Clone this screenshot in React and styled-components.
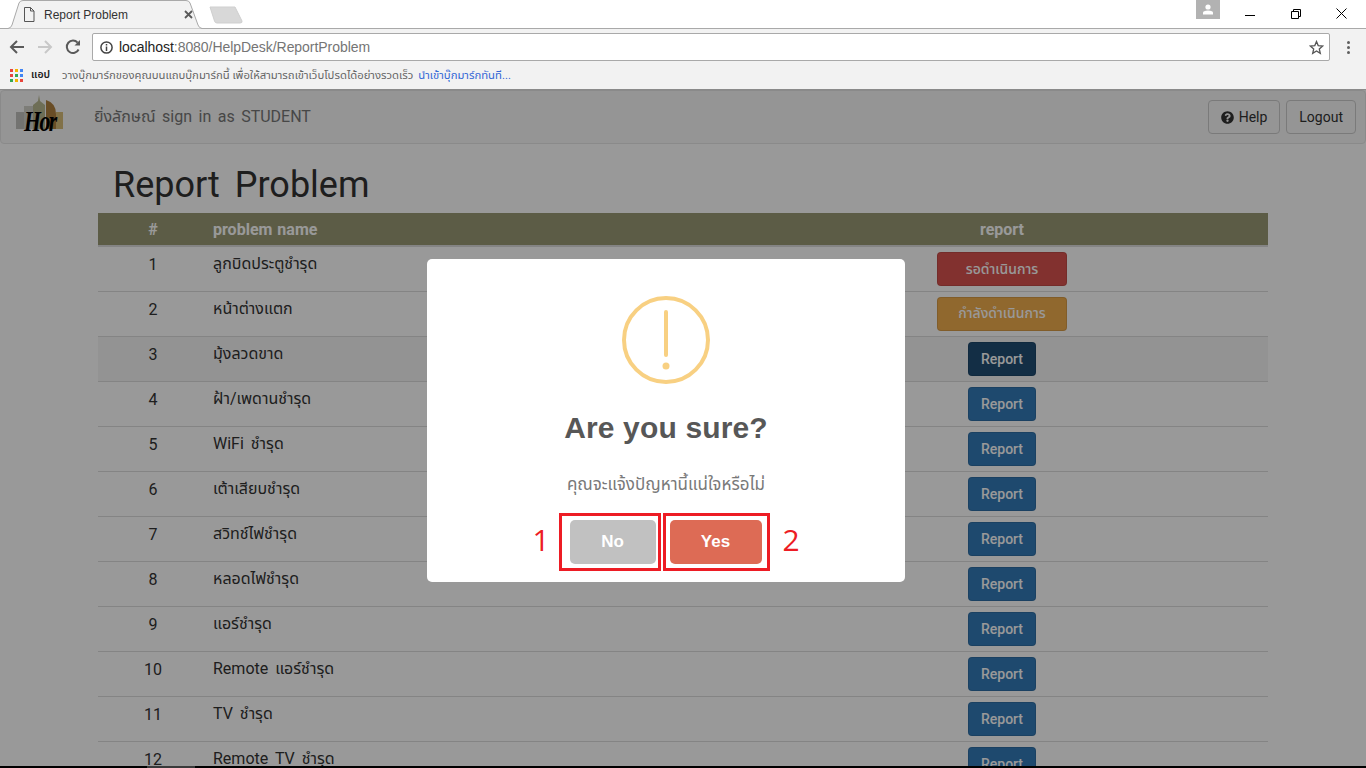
import React from 'react'
import styled, { createGlobalStyle } from 'styled-components'
import { FaQuestionCircle } from 'react-icons/fa'

const THAI = `Roboto, "Noto Sans", "Noto Sans Thai", "DejaVu Sans", sans-serif`
const ARIAL = `"Liberation Sans", Arial, sans-serif`

const problems = [
  { id: 1, name: 'ลูกบิดประตูชำรุด', status: 'waiting' },
  { id: 2, name: 'หน้าต่างแตก', status: 'working' },
  { id: 3, name: 'มุ้งลวดขาด', hover: true },
  { id: 4, name: 'ฝ้า/เพดานชำรุด' },
  { id: 5, name: 'WiFi ชำรุด' },
  { id: 6, name: 'เต้าเสียบชำรุด' },
  { id: 7, name: 'สวิทช์ไฟชำรุด' },
  { id: 8, name: 'หลอดไฟชำรุด' },
  { id: 9, name: 'แอร์ชำรุด' },
  { id: 10, name: 'Remote แอร์ชำรุด' },
  { id: 11, name: 'TV ชำรุด' },
  { id: 12, name: 'Remote TV ชำรุด' },
]

const appColors = ['#e8453c', '#f4b400', '#4285f4', '#e8453c', '#34a853', '#4285f4', '#34a853', '#f4b400', '#e8453c']

const GlobalStyle = createGlobalStyle`
  html, body { margin: 0; padding: 0; height: 100%; overflow: hidden; }
  body { font-family: ${THAI}; background: #fff; }
  * { box-sizing: border-box; }
`

const Screen = styled.div`
  height: 768px;
  display: flex;
  flex-direction: column;
  overflow: hidden;
`

const TabStrip = styled.div`
  height: 29px;
  flex: none;
  display: flex;
  align-items: flex-start;
  background: #fff;
  border-bottom: 1px solid #a9a9a9;
`

const Tab = styled.div`
  position: relative;
  width: 203px;
  height: 29px;
  margin-left: 5px;
  padding-left: 18px;
  display: flex;
  align-items: center;
  gap: 9px;
  font-family: ${ARIAL};
  font-size: 12px;
  color: #333;
  svg.shape { position: absolute; left: 0; top: 0; }
  > span, > svg:not(.shape) { position: relative; }
`

const TabTitle = styled.span`
  width: 131px;
  padding-top: 1px;
`

const NewTab = styled.svg`
  margin: 6px 0 0 1px;
  flex: none;
`

const WindowControls = styled.div`
  margin-left: auto;
  padding-right: 2px;
  display: flex;
  align-items: flex-start;
`

const Avatar = styled.div`
  width: 24px;
  height: 19px;
  margin-right: 7.5px;
  background: #b2b2b2;
  display: flex;
  align-items: center;
  justify-content: center;
`

const WinButton = styled.div`
  width: 45.5px;
  height: 27px;
  display: flex;
  align-items: center;
  justify-content: center;
`

const Toolbar = styled.div`
  height: 33px;
  flex: none;
  display: flex;
  align-items: center;
  background: #f2f2f2;
  padding: 4px 0 1px 9px;
`

const NavIcon = styled.div`
  width: 28px;
  display: flex;
  justify-content: flex-start;
`

const Omnibox = styled.div`
  width: 1238px;
  height: 28px;
  margin-left: -1px;
  background: #fff;
  border: 1px solid #a9a9a9;
  border-radius: 2px;
  display: flex;
  align-items: center;
  padding: 0 5px 0 7px;
  font-family: ${ARIAL};
  font-size: 14px;
  letter-spacing: -0.05px;
  color: #757575;
`

const Host = styled.span`
  color: #222;
  margin-left: 6px;
`

const Star = styled.svg`
  margin-left: auto;
`

const Kebab = styled.div`
  margin-left: 17px;
  display: flex;
  flex-direction: column;
  gap: 2px;
  i {
    width: 3px;
    height: 3px;
    background: #5f5f5f;
    border-radius: 50%;
  }
`

const BookmarkBar = styled.div`
  height: 28px;
  flex: none;
  background: #f2f2f2;
  display: flex;
  align-items: center;
  padding: 0 0 1px 10px;
  font-size: 11.3px;
  color: #666;
  border-bottom: 1px solid #8a8a8a;
`

const AppsGrid = styled.div`
  display: grid;
  grid-template-columns: repeat(3, 3px);
  grid-auto-rows: 3px;
  gap: 2px;
  margin-right: 8px;
`

const AppDot = styled.i`
  background: ${(p) => p.$color};
`

const AppsLabel = styled.span`
  color: #222;
  font-weight: 600;
  font-size: 10.5px;
  margin-right: 12px;
`

const BookmarkLink = styled.span`
  color: #3367d6;
  margin-left: 5px;
`

const Viewport = styled.main`
  position: relative;
  flex: 1;
  min-height: 0;
  overflow: hidden;
  background: #fff;
`

const Navbar = styled.header`
  height: 54px;
  background: #f8f8f8;
  border: 1px solid #e7e7e7;
  border-radius: 4px;
  display: flex;
  align-items: center;
  padding: 0 9px 0 14px;
`

const Logo = styled.div`
  position: relative;
  width: 50px;
  height: 50px;
  flex: none;
`

const LogoMark = styled.span`
  position: absolute;
  left: 9px;
  top: 13px;
  font-family: "Liberation Serif", serif;
  font-style: italic;
  font-weight: 700;
  font-size: 29px;
  line-height: 32px;
  letter-spacing: -2px;
  color: #000;
  transform: scaleX(0.75);
  transform-origin: left top;
`

const SignedIn = styled.div`
  margin-left: 29px;
  font-size: 16px;
  word-spacing: 2.5px;
  color: #777;
`

const NavActions = styled.div`
  margin-left: auto;
  display: flex;
  gap: 6px;
`

const NavButton = styled.button`
  height: 34px;
  padding: 0 12px;
  display: flex;
  align-items: center;
  gap: 5px;
  background: #fff0;
  border: 1px solid #ccc;
  border-radius: 4px;
  font-family: ${THAI};
  font-size: 14px;
  color: #333;
`

const Container = styled.div`
  width: 1170px;
  margin: 0 auto;
`

const PageTitle = styled.h1`
  margin: 21px 0 8px;
  padding-left: 15px;
  font-size: 36px;
  font-weight: 400;
  line-height: 40px;
  word-spacing: 6px;
  color: #333;
`

const Table = styled.table`
  width: 100%;
  border-collapse: collapse;
  table-layout: fixed;
  font-size: 16px;
  word-spacing: 3px;
  color: #333;
`

const HeadRow = styled.tr`
  background: #9a9a75;
  border-bottom: 2px solid #ddd;
`

const HeadCell = styled.th`
  height: 33px;
  padding: 1px 5px 0;
  color: #fff;
  font-size: 16px;
  font-weight: 700;
  word-spacing: 1px;
  text-align: ${(p) => p.$align || 'center'};
`

const Row = styled.tr`
  height: 45px;
  background: ${(p) => (p.$hover ? '#f5f5f5' : 'transparent')};
  border-bottom: 1px solid #ddd;
`

const Cell = styled.td`
  padding: 0 5px 9px;
  text-align: ${(p) => p.$align || 'center'};
  vertical-align: middle;
`

const ActionCell = styled.td`
  padding: 5px 0 0;
  vertical-align: top;
  text-align: center;
`

const buttonColors = {
  waiting: '#d9534f',
  working: '#f0ad4e',
  report: '#337ab7',
  active: '#204d74',
}

const ActionButton = styled.button`
  width: ${(p) => (p.$wide ? '130px' : '68px')};
  height: 34px;
  background: ${(p) => buttonColors[p.$kind]};
  border: 1px solid rgba(0, 0, 0, 0.1);
  border-radius: 4px;
  color: #fff;
  font-family: ${THAI};
  font-size: 14px;
  font-weight: 500;
  padding: 0;
`

const Overlay = styled.div`
  position: absolute;
  inset: 0;
  background: rgba(0, 0, 0, 0.4);
  display: flex;
  align-items: flex-start;
  justify-content: center;
  padding: 169px 34px 0 0;
`

const Modal = styled.div`
  width: 478px;
  height: 323px;
  background: #fff;
  border-radius: 5px;
  padding-top: 37px;
  display: flex;
  flex-direction: column;
  align-items: center;
`

const AlertIcon = styled.svg`
  flex: none;
`

const ModalTitle = styled.h2`
  margin: 26px 0 0;
  font-family: ${ARIAL};
  font-size: 30px;
  font-weight: 700;
  line-height: 36px;
  letter-spacing: 0.15px;
  color: #575757;
`

const ModalText = styled.p`
  margin: 27px 0 0;
  font-size: 17px;
  line-height: 22px;
  color: #797979;
`

const ConfirmRow = styled.div`
  margin-top: 18px;
  display: flex;
  align-items: center;
`

const Marker = styled.span`
  font-family: "Open Sans", sans-serif;
  font-size: 30px;
  line-height: 40px;
  padding-bottom: 4px;
  color: #ed1c24;
  width: 17px;
  text-align: center;
`

const MarkBox = styled.div`
  border: 3px solid #ed1c24;
  height: 58px;
  padding: ${(p) => p.$padding};
  margin: ${(p) => p.$margin};
`

const ConfirmButton = styled.button`
  display: block;
  width: ${(p) => p.$width}px;
  height: 44px;
  background: ${(p) => p.$bg};
  border: 0;
  border-radius: 5px;
  color: #fff;
  font-family: ${ARIAL};
  font-size: 17px;
  font-weight: 700;
  padding: 0;
`

const TaskbarEdge = styled.div`
  height: 2px;
  flex: none;
  background: #000;
  padding-left: 147px;
  i {
    display: block;
    width: 48px;
    height: 2px;
    background: #3a3a3a;
  }
`

function Chrome() {
  return (
    <>
      <TabStrip>
        <Tab>
          <svg className="shape" width="203" height="29" viewBox="0 0 203 29">
            <path d="M0 28.5 L3 28.5 Q6 28 7 25 L14 3 Q15 .5 18 .5 L181 .5 Q184 .5 185 3 L193 25 Q194 28 197 28.5 L203 28.5" fill="#f2f2f2" stroke="#a9a9a9" />
          </svg>
          <svg width="12" height="15" viewBox="0 0 12 15" fill="none" stroke="#555" strokeWidth="1">
            <path d="M1.5 .5 H7.5 L11 4 V14.5 H1.5 Z M7.5 .5 V4 H11" />
          </svg>
          <TabTitle>Report Problem</TabTitle>
          <svg width="9" height="9" viewBox="0 0 9 9" stroke="#5a5a5a" strokeWidth="1.8">
            <path d="M1 1 L8 8 M8 1 L1 8" />
          </svg>
        </Tab>
        <NewTab width="35" height="18" viewBox="0 0 35 18">
          <path d="M1 1 H26 L33 15 Q33.5 17 31 17 H8 Q6 17 5.5 15 Z" fill="#d8d8d8" stroke="#cfcfcf" />
        </NewTab>
        <WindowControls>
          <Avatar>
            <svg width="10" height="11" viewBox="0 0 10 11" fill="#fff">
              <circle cx="5" cy="3" r="2.6" />
              <path d="M0 10.5 V8.5 Q0 7 5 6.5 Q10 7 10 8.5 V10.5 Z" />
            </svg>
          </Avatar>
          <WinButton>
            <svg width="10" height="10" viewBox="0 0 10 10" stroke="#000"><path d="M0 6.5 H10" /></svg>
          </WinButton>
          <WinButton>
            <svg width="10" height="10" viewBox="0 0 10 10" fill="none" stroke="#000"><path d="M.5 2.5 H7.5 V9.5 H.5 Z M2.5 2.5 V.5 H9.5 V7.5 H7.5" /></svg>
          </WinButton>
          <WinButton>
            <svg width="11" height="11" viewBox="0 0 11 11" stroke="#000"><path d="M.5 .5 L10.5 10.5 M10.5 .5 L.5 10.5" /></svg>
          </WinButton>
        </WindowControls>
      </TabStrip>
      <Toolbar>
        <NavIcon>
          <svg width="16" height="16" viewBox="0 0 16 16" fill="none" stroke="#5a5a5a" strokeWidth="2"><path d="M15 8 H2 M8 2 L2 8 L8 14" /></svg>
        </NavIcon>
        <NavIcon>
          <svg width="16" height="16" viewBox="0 0 16 16" fill="none" stroke="#c8c8c8" strokeWidth="2"><path d="M1 8 H14 M8 2 L14 8 L8 14" /></svg>
        </NavIcon>
        <NavIcon>
          <svg width="16" height="16" viewBox="0 0 16 16" fill="none"><path d="M13.6 10.5 A6.2 6.2 0 1 1 12.6 3.6" stroke="#5a5a5a" strokeWidth="2" /><path d="M9.5 6.5 H15 V1 Z" fill="#5a5a5a" /></svg>
        </NavIcon>
        <Omnibox>
          <svg width="13" height="13" viewBox="0 0 13 13" fill="none" stroke="#444" strokeWidth="1.5">
            <circle cx="6.5" cy="6.5" r="5.6" />
            <path d="M6.5 5.5 V10 M6.5 3 V4.4" />
          </svg>
          <Host>localhost</Host>:8080/HelpDesk/ReportProblem
          <Star width="15" height="15" viewBox="0 0 15 15" fill="none" stroke="#555" strokeWidth="1.3">
            <path d="M7.5 1.5 L9.2 5.6 L13.7 6 L10.3 8.9 L11.3 13.3 L7.5 11 L3.7 13.3 L4.7 8.9 L1.3 6 L5.8 5.6 Z" />
          </Star>
        </Omnibox>
        <Kebab><i /><i /><i /></Kebab>
      </Toolbar>
      <BookmarkBar>
        <AppsGrid>
          {appColors.map((c, i) => <AppDot key={i} $color={c} />)}
        </AppsGrid>
        <AppsLabel>แอป</AppsLabel>
        วางบุ๊กมาร์กของคุณบนแถบบุ๊กมาร์กนี้ เพื่อให้สามารถเข้าเว็บโปรดได้อย่างรวดเร็ว
        <BookmarkLink>นำเข้าบุ๊กมาร์กทันที...</BookmarkLink>
      </BookmarkBar>
    </>
  )
}

function ReportCell({ status }) {
  if (status === 'waiting') return <ActionButton $wide $kind="waiting">รอดำเนินการ</ActionButton>
  if (status === 'working') return <ActionButton $wide $kind="working">กำลังดำเนินการ</ActionButton>
  return null
}

function App() {
  return (
    <Screen>
      <GlobalStyle />
      <Chrome />
      <Viewport>
        <Navbar>
          <Logo>
            <svg width="50" height="50" viewBox="0 0 50 50">
              <rect x="1" y="20" width="8" height="17" fill="#c0c0bc" />
              <rect x="9" y="14" width="9" height="23" fill="#d0d0c8" />
              <path d="M18 37 V13 L23 9 L24 3 L25 9 L30 13 V37 Z" fill="#b8b890" />
              <path d="M31 37 V8 Q41 11 41 22 V37 Z" fill="#b08040" />
              <rect x="41" y="20" width="7" height="17" fill="#d8bc78" />
            </svg>
            <LogoMark>Hor</LogoMark>
          </Logo>
          <SignedIn>ยิ่งลักษณ์ sign in as STUDENT</SignedIn>
          <NavActions>
            <NavButton><FaQuestionCircle size={13} />Help</NavButton>
            <NavButton>Logout</NavButton>
          </NavActions>
        </Navbar>
        <Container>
          <PageTitle>Report Problem</PageTitle>
          <Table>
            <colgroup>
              <col width="110" />
              <col width="528" />
              <col width="532" />
            </colgroup>
            <thead>
              <HeadRow>
                <HeadCell>#</HeadCell>
                <HeadCell $align="left">problem name</HeadCell>
                <HeadCell>report</HeadCell>
              </HeadRow>
            </thead>
            <tbody>
              {problems.map((p) => (
                <Row key={p.id} $hover={p.hover}>
                  <Cell>{p.id}</Cell>
                  <Cell $align="left">{p.name}</Cell>
                  <ActionCell>
                    {p.status ? <ReportCell status={p.status} /> : <ActionButton $kind={p.hover ? 'active' : 'report'}>Report</ActionButton>}
                  </ActionCell>
                </Row>
              ))}
            </tbody>
          </Table>
        </Container>
        <Overlay>
          <Modal>
            <AlertIcon width="88" height="88" viewBox="0 0 88 88">
              <circle cx="44" cy="44" r="42" fill="none" stroke="#f8d082" strokeWidth="4" />
              <rect x="42" y="14" width="4" height="47" rx="2" fill="#f8d082" />
              <circle cx="44" cy="70" r="3.5" fill="#f8d082" />
            </AlertIcon>
            <ModalTitle>Are you sure?</ModalTitle>
            <ModalText>คุณจะแจ้งปัญหานี้แน่ใจหรือไม่</ModalText>
            <ConfirmRow>
              <Marker>1</Marker>
              <MarkBox $margin="0 2px 0 9px" $padding="4px 2px 4px 8px">
                <ConfirmButton $width={86} $bg="#c1c1c1">No</ConfirmButton>
              </MarkBox>
              <MarkBox $margin="0 13px 0 0" $padding="4px 5px 4px 4px">
                <ConfirmButton $width={92} $bg="#dd6b55">Yes</ConfirmButton>
              </MarkBox>
              <Marker>2</Marker>
            </ConfirmRow>
          </Modal>
        </Overlay>
      </Viewport>
      <TaskbarEdge><i /></TaskbarEdge>
    </Screen>
  )
}

export default App
